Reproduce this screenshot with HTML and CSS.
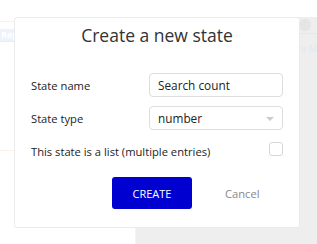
FILE: index.html
```html
<!DOCTYPE html>
<html lang="en">
<head>
    <meta charset="UTF-8">
    <title>Create a new state</title>
    <link rel="stylesheet" href="styles.css">
</head>
<body>
    <div class="topbar"></div>
    <div class="workspace">
        <div class="sidebar">
            <div class="line orange"></div>
            <div class="tab">Rep</div>
            <div class="line blue"></div>
            <div class="line orange lower"></div>
        </div>
        <div class="canvas">
            <div class="canvas-head"><span class="dot"></span></div>
            <div class="canvas-text">or M</div>
        </div>
    </div>

    <div class="modal">
        <h1>Create a new state</h1>
        <div class="row">
            <label>State name</label>
            <div class="field">Search count</div>
        </div>
        <div class="row">
            <label>State type</label>
            <div class="field select">number<span class="caret"></span></div>
        </div>
        <div class="row">
            <label>This state is a list (multiple entries)</label>
            <span class="check"></span>
        </div>
        <div class="actions">
            <button class="create">CREATE</button>
            <button class="cancel">Cancel</button>
        </div>
    </div>
</body>
</html>
```

FILE: styles.css
```css
body {
    margin: 0;
    font-family: "Open Sans", "Liberation Sans", sans-serif;
    background-color: #ffffff;
    width: 317px;
    height: 244px;
    overflow: hidden;
    position: relative;
}
.topbar {
    height: 17px;
    background-color: #ffffff;
}
.workspace {
    display: flex;
    height: 227px;
}
.sidebar {
    width: 135px;
    background-color: #ffffff;
    border-right: 1px solid #f4f4f4;
}
.line {
    height: 1px;
}
.line.orange {
    background-color: #fdf1e4;
    margin-top: 4px;
}
.line.orange.lower {
    margin-top: 108px;
}
.line.blue {
    background-color: #e8eef8;
}
.tab {
    margin-top: 7px;
    height: 12px;
    background-color: #edf2fc;
    color: #ffffff;
    font-size: 9px;
    font-weight: bold;
    line-height: 12px;
    padding-left: 1px;
}
.canvas {
    flex: 1;
    background-color: #edeeed;
}
.canvas-head {
    height: 16px;
    border-bottom: 1px solid #e6e7e6;
    display: flex;
    justify-content: flex-end;
    align-items: center;
    padding-right: 6px;
}
.dot {
    width: 12px;
    height: 12px;
    border-radius: 50%;
    background-color: #e4e5e4;
}
.canvas-text {
    margin-top: 8px;
    text-align: right;
    font-size: 9px;
    color: #e3e8f3;
}
.modal {
    position: absolute;
    left: 14px;
    top: 17px;
    width: 286px;
    height: 211px;
    box-sizing: border-box;
    background-color: #ffffff;
    border: 1px solid #ebebeb;
    border-radius: 3px;
    padding: 4px 16px 0 16px;
}
h1 {
    margin: 0 0 25px 0;
    text-align: center;
    font-size: 17.5px;
    font-weight: normal;
    color: #333333;
    line-height: 26px;
}
.row {
    display: flex;
    align-items: center;
    justify-content: space-between;
    height: 24px;
    margin-bottom: 9px;
}
label {
    font-size: 11.2px;
    color: #222222;
}
.field {
    width: 134px;
    height: 24px;
    box-sizing: border-box;
    border: 1px solid #dddddd;
    border-radius: 4px;
    padding-left: 8px;
    font-size: 11.8px;
    line-height: 22px;
    color: #222222;
    position: relative;
}
.caret {
    position: absolute;
    right: 8px;
    top: 10px;
    border-left: 4px solid transparent;
    border-right: 4px solid transparent;
    border-top: 4px solid #cccccc;
}
.check {
    width: 14px;
    height: 14px;
    box-sizing: border-box;
    border: 1px solid #d6d6d6;
    border-radius: 3px;
    margin-top: -4px;
}
.actions {
    display: flex;
    align-items: center;
    margin-top: 14px;
    padding-left: 81px;
}
button {
    border: none;
    font-family: "Open Sans", "Liberation Sans", sans-serif;
    cursor: pointer;
}
.create {
    width: 80px;
    height: 32px;
    background-color: #0000d0;
    color: #ffffff;
    font-size: 11px;
    border-radius: 3px;
}
.cancel {
    background: none;
    color: #888888;
    font-size: 11.2px;
    margin-left: 33px;
    padding: 0;
}
```
